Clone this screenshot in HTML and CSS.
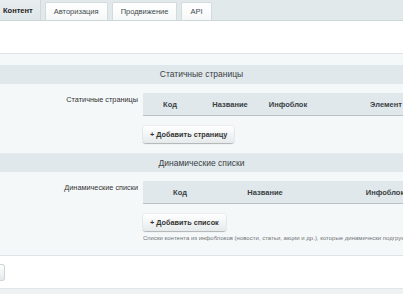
FILE: index.html
```html
<!DOCTYPE html>
<html lang="ru">
<head>
    <meta charset="UTF-8">
    <title>Настройки модуля</title>
    <link rel="stylesheet" href="styles.css">
</head>
<body>
    <!-- Tabs -->
    <div class="tabs">
        <div class="tab active">Контент</div>
        <div class="tab">Авторизация</div>
        <div class="tab">Продвижение</div>
        <div class="tab">API</div>
    </div>
    <div class="tab-top"></div>

    <!-- Settings -->
    <div class="content">
        <div class="section-head">Статичные страницы</div>
        <div class="row">
            <div class="label">Статичные страницы</div>
            <div class="field">
                <div class="grid-head">
                    <div class="col" style="width: 54px">Код</div>
                    <div class="col" style="width: 66px">Название</div>
                    <div class="col" style="width: 50px">Инфоблок</div>
                    <div class="col" style="width: 146px">Элемент</div>
                </div>
                <button class="add-btn">+ Добавить страницу</button>
            </div>
        </div>

        <div class="section-head">Динамические списки</div>
        <div class="row">
            <div class="label">Динамические списки</div>
            <div class="field">
                <div class="grid-head">
                    <div class="col" style="width: 74px">Код</div>
                    <div class="col" style="width: 96px">Название</div>
                    <div class="col" style="width: 144px">Инфоблок</div>
                </div>
                <button class="add-btn">+ Добавить список</button>
                <div class="hint">Списки контента из инфоблоков (новости, статьи, акции и др.), которые динамически подгружаются на страницы</div>
            </div>
        </div>
    </div>

    <!-- Footer -->
    <div class="footer">
        <button class="save-btn"></button>
    </div>
    <div class="bottom"></div>
</body>
</html>
```

FILE: styles.css
```css
* {
    margin: 0;
    padding: 0;
    box-sizing: border-box;
    font-family: "Liberation Sans", Arial, sans-serif;
}

body {
    width: 403px;
    overflow: hidden;
    background-color: #ffffff;
    color: #333;
}

/* Tabs */
.tabs {
    display: flex;
    align-items: flex-end;
    gap: 4px;
    height: 21px;
    background-color: #e1e9eb;
    border-bottom: 1px solid #cdd6d9;
}

.tab {
    height: 18px;
    padding: 0 8px;
    display: flex;
    align-items: center;
    font-size: 7.5px;
    color: #3f4b4e;
    background: linear-gradient(#ffffff, #f6f8f8);
    border: 1px solid #d3dbde;
    border-bottom: none;
    border-radius: 2px 2px 0 0;
}

.tab.active {
    height: 20px;
    padding: 0 7px 0 3px;
    font-weight: bold;
    color: #222;
    background: linear-gradient(#e9eef0, #dfe6e9);
    border: none;
    border-right: 1px solid #d0d8db;
    border-radius: 0;
}

.tab-top {
    height: 33px;
    background-color: #ffffff;
    border-bottom: 1px solid #dce3e5;
}

/* Content */
.content {
    background-color: #f5f8f9;
    padding-top: 11px;
}

.section-head {
    height: 19px;
    line-height: 19px;
    text-align: center;
    font-size: 8.5px;
    color: #3a4043;
    background-color: #e1e8eb;
}

.row {
    display: flex;
    padding: 9px 0 10px;
}

.row + .section-head {
    border-top: 1px solid #e6ecee;
}

.label {
    width: 143px;
    flex-shrink: 0;
    padding: 2px 5px 0 0;
    text-align: right;
    font-size: 7.3px;
    color: #333;
}

.field {
    display: flex;
    flex-direction: column;
    align-items: flex-start;
    min-width: 0;
}

.grid-head {
    display: flex;
    height: 23px;
    background-color: #e1e8eb;
    border-bottom: 1px solid #b8c2c5;
}

.col {
    flex-shrink: 0;
    display: flex;
    align-items: center;
    justify-content: center;
    font-size: 7.5px;
    font-weight: bold;
    color: #3a4245;
}

.add-btn {
    margin-top: 10px;
    height: 17px;
    padding: 0 7px;
    font-size: 7.3px;
    font-weight: bold;
    color: #333;
    background: linear-gradient(#ffffff, #e6eaeb);
    border: none;
    border-radius: 3px;
    box-shadow: 0 1px 1px rgba(0, 0, 0, 0.25), 0 0 0 1px rgba(0, 0, 0, 0.04);
}

.hint {
    margin-top: 4px;
    font-size: 6px;
    color: #6f7577;
    white-space: nowrap;
}

.row:last-child {
    padding-bottom: 14px;
}

/* Footer */
.footer {
    height: 33px;
    padding-top: 8px;
    background-color: #ffffff;
    border-top: 1px solid #dfe5e7;
}

.save-btn {
    display: block;
    width: 5px;
    height: 17px;
    background: linear-gradient(#ffffff, #e6eaeb);
    border: 1px solid #cfd6d8;
    border-left: none;
    border-radius: 0 3px 3px 0;
}

.bottom {
    height: 10px;
    background-color: #eef2f3;
    border-top: 1px solid #e1e7e9;
}
```
